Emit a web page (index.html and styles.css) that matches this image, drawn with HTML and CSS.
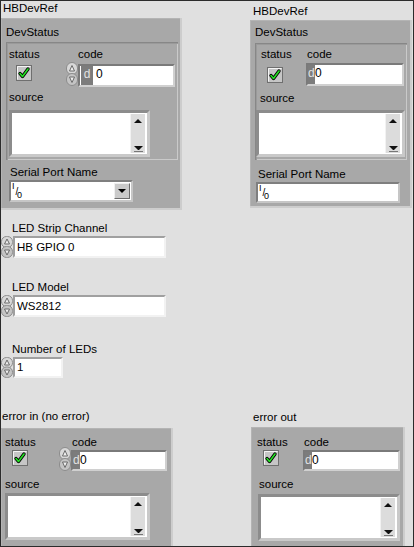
FILE: index.html
```html
<!DOCTYPE html>
<html>
<head>
<meta charset="utf-8">
<link rel="stylesheet" href="styles.css">
</head>
<body>
<div class="panel">
  <div class="col col-l">
    <div class="lbl l-top">HBDevRef</div>
    <div class="clu dev-l">
      <div class="lbl">DevStatus</div>
      <div class="clu-in in-l">
        <div class="err-row">
          <div class="st st-l">
            <div class="lbl">status</div>
            <svg class="chk chk-l" width="16" height="16" viewBox="0 0 16 16"><rect x="0.5" y="0.5" width="15" height="15" fill="#c6c6c6" stroke="#6f6f6f"/><path d="M1.5 14.5V1.5H14.5" stroke="#f4f4f4" fill="none"/><path d="M4 8.5L6.5 11.5L12 4" stroke="#000" stroke-width="3.4" fill="none" stroke-linecap="round" stroke-linejoin="round"/><path d="M4 8.5L6.5 11.5L12 4" stroke="#22e022" stroke-width="1.6" fill="none" stroke-linecap="round" stroke-linejoin="round"/></svg>
          </div>
          <div class="cd">
            <div class="lbl cd-lbl-l">code</div>
            <div class="cd-row">
              <svg class="spin" width="12" height="24" viewBox="0 0 12 24"><rect x="0.5" y="0.5" width="11" height="12" rx="5.5" fill="#d8d8d8" stroke="#8c8c8c"/><rect x="0.5" y="11.5" width="11" height="12" rx="5.5" fill="#c4c4c4" stroke="#8c8c8c"/><path d="M6 3.5L8.5 9H3.5Z" fill="#f0f0f0" stroke="#6a6a6a"/><path d="M6 20.5L8.5 15H3.5Z" fill="#f0f0f0" stroke="#6a6a6a"/></svg>
              <div class="num num-l"><span class="radix radix-w">d</span><span class="val">0</span></div>
            </div>
          </div>
        </div>
        <div class="lbl src-lbl-l">source</div>
        <div class="src src-l"><div class="src-txt"></div><div class="sb"><span class="up"></span><span class="dn"></span></div></div>
      </div>
      <div class="lbl spn-lbl-l">Serial Port Name</div>
      <div class="combo combo-l">
        <span class="io"><span class="io-i">I</span><span class="io-s">/</span><span class="io-o">0</span></span>
        <span class="combo-txt"></span>
        <span class="dd"><span class="tri"></span></span>
      </div>
    </div>

    <div class="lbl led-lbl led1">LED Strip Channel</div>
    <div class="frow">
      <svg class="spin" width="12" height="22" viewBox="0 0 12 22"><rect x="0.5" y="0.5" width="11" height="11" rx="5" fill="#d8d8d8" stroke="#8c8c8c"/><rect x="0.5" y="10.5" width="11" height="11" rx="5" fill="#c4c4c4" stroke="#8c8c8c"/><path d="M6 3L8.5 8H3.5Z" fill="#f0f0f0" stroke="#6a6a6a"/><path d="M6 19L8.5 14H3.5Z" fill="#f0f0f0" stroke="#6a6a6a"/></svg>
      <div class="tf tf-wide">HB GPIO 0</div>
    </div>
    <div class="lbl led-lbl led2">LED Model</div>
    <div class="frow">
      <svg class="spin" width="12" height="22" viewBox="0 0 12 22"><rect x="0.5" y="0.5" width="11" height="11" rx="5" fill="#d8d8d8" stroke="#8c8c8c"/><rect x="0.5" y="10.5" width="11" height="11" rx="5" fill="#c4c4c4" stroke="#8c8c8c"/><path d="M6 3L8.5 8H3.5Z" fill="#f0f0f0" stroke="#6a6a6a"/><path d="M6 19L8.5 14H3.5Z" fill="#f0f0f0" stroke="#6a6a6a"/></svg>
      <div class="tf tf-wide">WS2812</div>
    </div>
    <div class="lbl led-lbl led3">Number of LEDs</div>
    <div class="frow">
      <svg class="spin" width="12" height="21" viewBox="0 0 12 21"><rect x="0.5" y="0.5" width="11" height="10.5" rx="5" fill="#d8d8d8" stroke="#8c8c8c"/><rect x="0.5" y="10" width="11" height="10.5" rx="5" fill="#c4c4c4" stroke="#8c8c8c"/><path d="M6 3L8.5 8H3.5Z" fill="#f0f0f0" stroke="#6a6a6a"/><path d="M6 18L8.5 13H3.5Z" fill="#f0f0f0" stroke="#6a6a6a"/></svg>
      <div class="tf tf-num">1</div>
    </div>

    <div class="lbl ein-lbl">error in (no error)</div>
    <div class="clu ein">
      <div class="err-row">
        <div class="st st-ein">
          <div class="lbl">status</div>
          <svg class="chk chk-ein" width="16" height="16" viewBox="0 0 16 16"><rect x="0.5" y="0.5" width="15" height="15" fill="#c6c6c6" stroke="#6f6f6f"/><path d="M1.5 14.5V1.5H14.5" stroke="#f4f4f4" fill="none"/><path d="M4 8.5L6.5 11.5L12 4" stroke="#000" stroke-width="3.4" fill="none" stroke-linecap="round" stroke-linejoin="round"/><path d="M4 8.5L6.5 11.5L12 4" stroke="#22e022" stroke-width="1.6" fill="none" stroke-linecap="round" stroke-linejoin="round"/></svg>
        </div>
        <div class="cd">
          <div class="lbl cd-lbl-ein">code</div>
          <div class="cd-row">
            <svg class="spin spin-ein" width="12" height="24" viewBox="0 0 12 24"><rect x="0.5" y="0.5" width="11" height="12" rx="5.5" fill="#d8d8d8" stroke="#8c8c8c"/><rect x="0.5" y="11.5" width="11" height="12" rx="5.5" fill="#c4c4c4" stroke="#8c8c8c"/><path d="M6 3.5L8.5 9H3.5Z" fill="#f0f0f0" stroke="#6a6a6a"/><path d="M6 20.5L8.5 15H3.5Z" fill="#f0f0f0" stroke="#6a6a6a"/></svg>
            <div class="num num-ein"><span class="radix radix-n">d</span><span class="val">0</span></div>
          </div>
        </div>
      </div>
      <div class="lbl src-lbl-ein">source</div>
      <div class="src src-ein"><div class="src-txt"></div><div class="sb"><span class="up"></span><span class="dn"></span></div></div>
    </div>
  </div>

  <div class="col col-r">
    <div class="lbl r-top">HBDevRef</div>
    <div class="clu dev-r">
      <div class="lbl">DevStatus</div>
      <div class="clu-in in-r">
        <div class="err-row">
          <div class="st st-r">
            <div class="lbl">status</div>
            <svg class="chk chk-r" width="16" height="16" viewBox="0 0 16 16"><rect x="0.5" y="0.5" width="15" height="15" fill="#c6c6c6" stroke="#6f6f6f"/><path d="M1.5 14.5V1.5H14.5" stroke="#f4f4f4" fill="none"/><path d="M4 8.5L6.5 11.5L12 4" stroke="#000" stroke-width="3.4" fill="none" stroke-linecap="round" stroke-linejoin="round"/><path d="M4 8.5L6.5 11.5L12 4" stroke="#22e022" stroke-width="1.6" fill="none" stroke-linecap="round" stroke-linejoin="round"/></svg>
          </div>
          <div class="cd">
            <div class="lbl cd-lbl-r">code</div>
            <div class="num num-r"><span class="radix radix-n">d</span><span class="val">0</span></div>
          </div>
        </div>
        <div class="lbl src-lbl-r">source</div>
        <div class="src src-r"><div class="src-txt"></div><div class="sb"><span class="up"></span><span class="dn"></span></div></div>
      </div>
      <div class="lbl spn-lbl-r">Serial Port Name</div>
      <div class="combo combo-r">
        <span class="io"><span class="io-i">I</span><span class="io-s">/</span><span class="io-o">0</span></span>
        <span class="combo-txt"></span>
      </div>
    </div>

    <div class="lbl eout-lbl">error out</div>
    <div class="clu eout">
      <div class="err-row">
        <div class="st st-eout">
          <div class="lbl">status</div>
          <svg class="chk chk-eout" width="16" height="16" viewBox="0 0 16 16"><rect x="0.5" y="0.5" width="15" height="15" fill="#c6c6c6" stroke="#6f6f6f"/><path d="M1.5 14.5V1.5H14.5" stroke="#f4f4f4" fill="none"/><path d="M4 8.5L6.5 11.5L12 4" stroke="#000" stroke-width="3.4" fill="none" stroke-linecap="round" stroke-linejoin="round"/><path d="M4 8.5L6.5 11.5L12 4" stroke="#22e022" stroke-width="1.6" fill="none" stroke-linecap="round" stroke-linejoin="round"/></svg>
        </div>
        <div class="cd">
          <div class="lbl cd-lbl-eout">code</div>
          <div class="num num-eout"><span class="radix radix-n">d</span><span class="val">0</span></div>
        </div>
      </div>
      <div class="lbl src-lbl-eout">source</div>
      <div class="src src-eout"><div class="src-txt"></div><div class="sb"><span class="up"></span><span class="dn"></span></div></div>
    </div>
  </div>
</div>
</body>
</html>
```
FILE: styles.css
```css
* { box-sizing: border-box; margin: 0; padding: 0; }
body {
  margin: 0;
  background: #e0e0e0;
  font-family: "Liberation Sans", Arial, sans-serif;
  font-size: 11.5px;
  line-height: 15px;
  color: #000;
}
.panel {
  width: 414px;
  height: 547px;
  border: 1px solid #2b2b2b;
  background: #e0e0e0;
  display: flex;
  overflow: hidden;
}
.col { display: flex; flex-direction: column; flex: none; }
.col-l { width: 181px; }
.col-r { width: 163px; margin-left: 68px; }
.lbl { height: 15px; white-space: nowrap; flex: none; }

/* clusters */
.clu {
  background: #a8a8a8;
  flex: none;
  box-shadow: inset -2px -2px 0 #cdcdcd, inset 1px 1px 0 #b4b4b4;
}
.clu-in {
  background: #a8a8a8;
  box-shadow: inset 1px 1px 0 #878787, inset 2px 2px 0 #9a9a9a, inset -1px -1px 0 #cacaca;
}
.err-row { display: flex; align-items: flex-start; }
.st { flex: none; }
.cd { flex: none; }
.cd-row { display: flex; align-items: flex-start; }
.chk { display: block; }
.spin { display: block; flex: none; }

.num {
  display: flex;
  background: #fff;
  border: 2px solid;
  border-color: #7a7a7a #d0d0d0 #d0d0d0 #7a7a7a;
  overflow: hidden;
  font-size: 12px;
}
.radix {
  background: #7c7c7c;
  color: #e2e2e2;
  text-align: center;
  flex: none;
  line-height: 17px;
}
.radix-w { width: 12px; margin-left: 1px; }
.radix-n { width: 7px; text-align: left; }
.val { line-height: 17px; padding-left: 3px; }
.radix-n + .val { padding-left: 0; }

.src {
  display: flex;
  background: #fff;
  border: 3px solid;
  border-color: #8c8c8c #c9c9c9 #c9c9c9 #8c8c8c;
  flex: none;
}
.src-txt { flex: 1; }
.sb {
  width: 15px;
  margin: 1px 2px 1px 0;
  background: #dcdcdc;
  border-left: 1px solid #f2f2f2;
  display: flex;
  flex-direction: column;
  justify-content: space-between;
  align-items: center;
  padding: 5px 0 2px;
}
.up {
  width: 0; height: 0;
  border-left: 4px solid transparent;
  border-right: 4px solid transparent;
  border-bottom: 4px solid #111;
}
.dn {
  width: 9px; height: 5px;
  border-top: 4px solid #111;
  border-left: 4px solid transparent;
  border-right: 4px solid transparent;
  box-shadow: 0 1px 0 #777;
}

.combo {
  display: flex;
  align-items: stretch;
  background: #fff;
  border: 2px solid;
  border-color: #7f7f7f #c6c6c6 #c6c6c6 #7f7f7f;
  flex: none;
}
.io {
  display: grid;
  width: 10px;
  flex: none;
  font-size: 9px;
  line-height: 9px;
  margin-left: 1px;
}
.io > span { grid-area: 1 / 1; }
.io-i { align-self: start; justify-self: start; }
.io-s { align-self: center; justify-self: center; font-size: 10px; }
.io-o { align-self: end; justify-self: end; }
.combo-txt { flex: 1; }
.dd {
  width: 16px;
  flex: none;
  background: #cacaca;
  border: 1px solid;
  border-color: #f0f0f0 #6d6d6d #6d6d6d #f0f0f0;
  display: flex;
  align-items: center;
  justify-content: center;
  margin: 1px 1px 1px 0;
}
.tri {
  width: 0; height: 0;
  border-left: 4px solid transparent;
  border-right: 4px solid transparent;
  border-top: 4px solid #000;
}

.tf {
  background: #fff;
  border: 2px solid;
  border-color: #a0a0a0 #f2f2f2 #f2f2f2 #a0a0a0;
  padding-left: 2px;
  line-height: 18px;
  flex: none;
}
.frow { display: flex; align-items: flex-start; flex: none; }
.tf-wide { width: 153px; height: 22px; }
.tf-num { width: 50px; height: 21px; line-height: 17px; }

/* left column */
.l-top { padding-left: 2px; height: 17px; }
.dev-l { width: 181px; height: 192px; padding: 7px 0 0 5px; }
.in-l { width: 172px; height: 118px; margin-top: 2px; padding: 5px 0 0 3px; }
.st-l { width: 57px; }
.chk-l { margin: 3px 0 0 7px; }
.cd-lbl-l { margin-left: 12px; }
.num-l { width: 97px; height: 23px; margin-top: 2px; }
.src-lbl-l { margin-top: 3px; }
.src-l { width: 141px; height: 47px; margin-top: 5px; }
.spn-lbl-l { margin: 5px 0 0 4px; }
.combo-l { width: 124px; height: 22px; margin-left: 3px; }

.led-lbl { padding-left: 11px; }
.led1 { margin-top: 11px; }
.led2 { margin-top: 22px; }
.led3 { margin-top: 25px; }

.ein-lbl { margin-top: 31px; padding-left: 1px; }
.ein { width: 172px; height: 125px; margin-top: 4px; padding: 7px 0 0 4px; }
.st-ein { width: 54px; }
.chk-ein { margin: 0 0 0 7px; }
.cd-lbl-ein { margin-left: 13px; }
.spin-ein { margin-top: -3px; }
.num-ein { width: 96px; height: 21px; }
.src-lbl-ein { margin-top: 6px; }
.src-ein { width: 145px; height: 47px; margin-top: 1px; }

/* right column */
.r-top { margin-top: 3px; padding-left: 3px; }
.dev-r { width: 162px; height: 188px; margin-top: 1px; padding: 5px 0 0 5px; }
.in-r { width: 152px; height: 117px; margin-top: 3px; padding: 4px 0 0 6px; }
.st-r { width: 45px; }
.chk-r { margin: 5px 0 0 6px; }
.cd-lbl-r { margin-left: 1px; }
.num-r { width: 98px; height: 23px; margin-top: 1px; }
.src-lbl-r { margin: 5px 0 0 -1px; }
.src-r { width: 149px; height: 47px; margin: 4px 0 0 -5px; }
.spn-lbl-r { margin: 7px 0 0 3px; }
.combo-r { width: 144px; height: 21px; margin: 0 0 0 1px; }

.eout-lbl { margin-top: 202px; padding-left: 3px; }
.eout { width: 154px; height: 125px; margin: 2px 0 0 1px; padding: 8px 0 0 6px; }
.st-eout { width: 46px; }
.chk-eout { margin: 0 0 0 6px; }
.cd-lbl-eout { margin-left: 1px; }
.num-eout { width: 97px; height: 21px; }
.src-lbl-eout { margin: 6px 0 0 2px; }
.src-eout { width: 142px; height: 47px; margin: 2px 0 0 1px; }
```
